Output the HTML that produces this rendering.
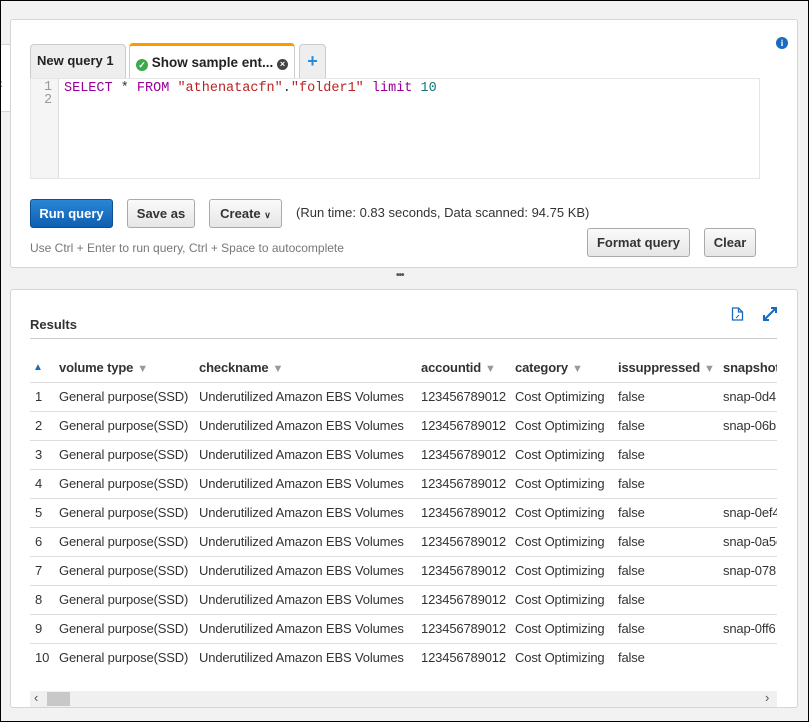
<!DOCTYPE html>
<html><head><style>
*{box-sizing:border-box;margin:0;padding:0}
body{width:809px;height:722px;background:#f2f2f2;font-family:"Liberation Sans",sans-serif;position:relative;overflow:hidden;color:#333}
.abs{position:absolute}
.frame{position:absolute;left:0;top:0;width:809px;height:722px;border:1px solid #000;pointer-events:none}
.panel{position:absolute;background:#fff;border:1px solid #d5d5d5;border-radius:3px}
.tab{position:absolute;top:44px;height:34px;border:1px solid #ccc;border-bottom:none;border-radius:4px 4px 0 0;background:#eee;font-weight:bold;font-size:13px;color:#222}
.btn{position:absolute;height:29px;border:1px solid #aaa;border-radius:3px;background:linear-gradient(#fafafa,#e6e6e6);font-size:13px;font-weight:bold;color:#333;text-align:center;line-height:27px}
.code{font-family:"Liberation Mono",monospace;font-size:13.5px}
table{border-collapse:collapse;font-size:13px;color:#333;white-space:nowrap;table-layout:fixed;width:800px;letter-spacing:-0.15px}
td{height:29px;border-top:1px solid #ddd;padding:0;vertical-align:middle;overflow:hidden}
th{height:29px;text-align:left;font-weight:bold;padding:0;overflow:hidden}
.ar{color:#999;font-size:11px;margin-left:4px}
</style></head><body>
<div class="abs" style="left:0;top:44px;width:11px;height:68px;background:#fff;border-top:1px solid #d5d5d5;border-bottom:1px solid #d5d5d5"></div>
<div class="abs" style="left:-2px;top:75px;font-size:14px;color:#555">&#x2039;</div>
<div class="panel" style="left:10px;top:19px;width:788px;height:249px"></div>
<div class="abs" style="left:776px;top:37px;width:12px;height:12px;border-radius:50%;background:#1a6bbd;color:#fff;font-size:9px;font-weight:bold;text-align:center;line-height:12px;font-family:'Liberation Serif',serif">i</div>
<div class="tab" style="left:30px;width:96px;padding:8px 0 0 6px">New query 1</div>
<div class="tab" style="left:129px;width:166px;background:#fff;border-top:3px solid #f90;top:43px;height:36px;padding:9px 0 0 6px;font-size:13.5px"><span style="display:inline-block;width:12px;height:12px;border-radius:50%;background:#3ea94a;color:#fff;font-size:9px;text-align:center;line-height:12px;vertical-align:-1px">&#x2713;</span> Show sample ent... <span style="display:inline-block;width:11px;height:11px;border-radius:50%;background:#444;color:#fff;font-size:9px;text-align:center;line-height:11px;vertical-align:0">&#xd7;</span></div>
<div class="tab" style="left:299px;width:27px;text-align:center;padding-top:6px;color:#2a8bd5;font-size:18px">+</div>
<div class="abs" style="left:30px;top:78px;width:730px;height:101px;border:1px solid #e6e6e6;background:#fff"></div>
<div class="abs" style="left:31px;top:79px;width:28px;height:99px;background:#f5f5f5;border-right:1px solid #ddd"></div>
<div class="abs code" style="left:44px;top:81px;color:#999;line-height:13px">1<br>2</div>
<div class="abs code" style="left:64px;top:81px"><span style="color:#909">SELECT</span> * <span style="color:#909">FROM</span> <span style="color:#b22">"athenatacfn"</span>.<span style="color:#b22">"folder1"</span> <span style="color:#909">limit</span> <span style="color:#177">10</span></div>
<div class="btn" style="left:30px;top:199px;width:83px;background:linear-gradient(#2b86d6,#0e5fb0);border-color:#0b4f94;color:#fff">Run query</div>
<div class="btn" style="left:127px;top:199px;width:68px">Save as</div>
<div class="btn" style="left:209px;top:199px;width:73px">Create <span style="font-size:9px">&#x2228;</span></div>
<div class="abs" style="left:296px;top:205px;font-size:13px;color:#333">(Run time: 0.83 seconds, Data scanned: 94.75 KB)</div>
<div class="abs" style="left:30px;top:241px;font-size:12px;color:#777">Use Ctrl + Enter to run query, Ctrl + Space to autocomplete</div>
<div class="btn" style="left:587px;top:228px;width:103px">Format query</div>
<div class="btn" style="left:704px;top:228px;width:52px">Clear</div>
<div class="abs" style="left:396px;top:270px;font-size:10px;color:#555;font-weight:bold;letter-spacing:-1px">•••</div>
<div class="panel" style="left:10px;top:289px;width:788px;height:419px"></div>
<div class="abs" style="left:30px;top:317px;font-size:13px;font-weight:bold;color:#333">Results</div>
<div class="abs" style="left:30px;top:338px;width:747px;height:1px;background:#ccc"></div>
<svg class="abs" style="left:731px;top:307px" width="13" height="14" viewBox="0 0 13 14"><path d="M1.5 1h6l4 4v8h-10z M7.5 1v4h4" fill="none" stroke="#1a6bbd" stroke-width="1.3"/><path d="M5 11l3-3" stroke="#1a6bbd" stroke-width="1"/></svg>
<svg class="abs" style="left:763px;top:307px" width="14" height="14" viewBox="0 0 14 14"><path d="M2 12L12 2M8 1h5v5M1 8v5h5" fill="none" stroke="#1a6bbd" stroke-width="2"/></svg>
<div class="abs" style="left:30px;top:353px;width:747px;height:335px;overflow:hidden">
<table>
<colgroup><col style="width:29px"><col style="width:140px"><col style="width:222px"><col style="width:94px"><col style="width:103px"><col style="width:105px"><col style="width:107px"></colgroup>
<tr><th style="padding-left:3px;color:#1a6bbd;font-size:10px">&#x25B2;</th><th>volume type<span class="ar">&#x25BC;</span></th><th>checkname<span class="ar">&#x25BC;</span></th><th>accountid<span class="ar">&#x25BC;</span></th><th>category<span class="ar">&#x25BC;</span></th><th>issuppressed<span class="ar">&#x25BC;</span></th><th>snapshotid</th></tr>
<tr><td style="padding-left:5px">1</td><td>General purpose(SSD)</td><td>Underutilized Amazon EBS Volumes</td><td>123456789012</td><td>Cost Optimizing</td><td>false</td><td>snap-0d4</td></tr>
<tr><td style="padding-left:5px">2</td><td>General purpose(SSD)</td><td>Underutilized Amazon EBS Volumes</td><td>123456789012</td><td>Cost Optimizing</td><td>false</td><td>snap-06b</td></tr>
<tr><td style="padding-left:5px">3</td><td>General purpose(SSD)</td><td>Underutilized Amazon EBS Volumes</td><td>123456789012</td><td>Cost Optimizing</td><td>false</td><td></td></tr>
<tr><td style="padding-left:5px">4</td><td>General purpose(SSD)</td><td>Underutilized Amazon EBS Volumes</td><td>123456789012</td><td>Cost Optimizing</td><td>false</td><td></td></tr>
<tr><td style="padding-left:5px">5</td><td>General purpose(SSD)</td><td>Underutilized Amazon EBS Volumes</td><td>123456789012</td><td>Cost Optimizing</td><td>false</td><td>snap-0ef4</td></tr>
<tr><td style="padding-left:5px">6</td><td>General purpose(SSD)</td><td>Underutilized Amazon EBS Volumes</td><td>123456789012</td><td>Cost Optimizing</td><td>false</td><td>snap-0a5e</td></tr>
<tr><td style="padding-left:5px">7</td><td>General purpose(SSD)</td><td>Underutilized Amazon EBS Volumes</td><td>123456789012</td><td>Cost Optimizing</td><td>false</td><td>snap-078</td></tr>
<tr><td style="padding-left:5px">8</td><td>General purpose(SSD)</td><td>Underutilized Amazon EBS Volumes</td><td>123456789012</td><td>Cost Optimizing</td><td>false</td><td></td></tr>
<tr><td style="padding-left:5px">9</td><td>General purpose(SSD)</td><td>Underutilized Amazon EBS Volumes</td><td>123456789012</td><td>Cost Optimizing</td><td>false</td><td>snap-0ff6</td></tr>
<tr><td style="padding-left:5px">10</td><td>General purpose(SSD)</td><td>Underutilized Amazon EBS Volumes</td><td>123456789012</td><td>Cost Optimizing</td><td>false</td><td></td></tr>
</table></div>
<div class="abs" style="left:30px;top:691px;width:747px;height:16px;background:#f0f0f0"></div>
<div class="abs" style="left:47px;top:692px;width:23px;height:14px;background:#c8c8c8"></div>
<div class="abs" style="left:34px;top:690px;font-size:13px;color:#555">&#x2039;</div>
<div class="abs" style="left:765px;top:690px;font-size:13px;color:#555">&#x203A;</div>
<div class="frame"></div>
</body></html>
